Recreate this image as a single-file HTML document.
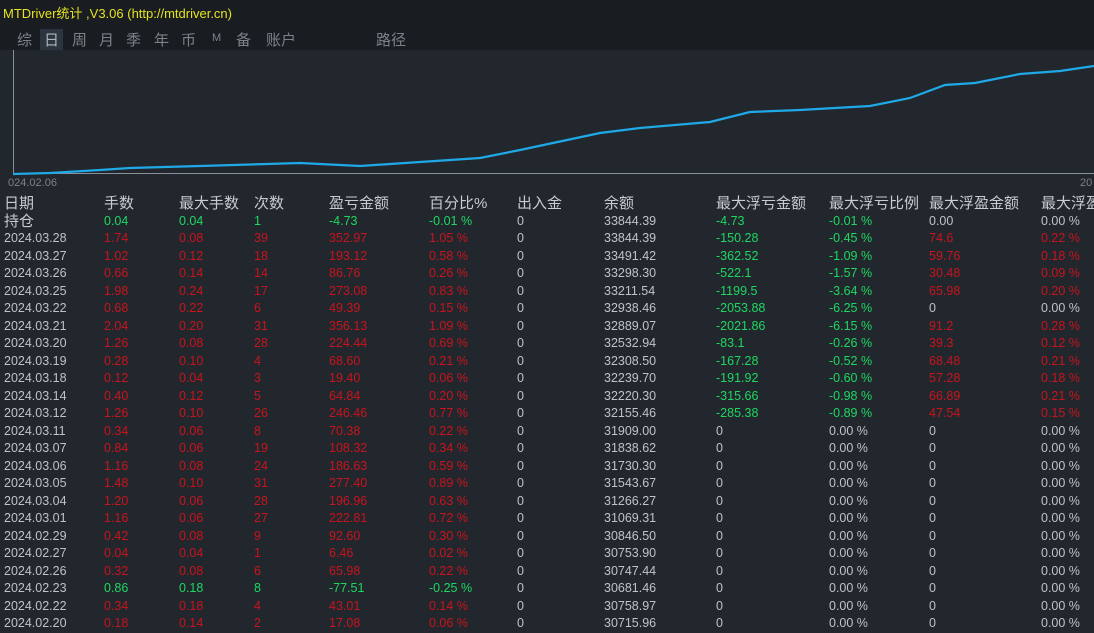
<!DOCTYPE html>
<html><head><meta charset="utf-8"><style>
*{margin:0;padding:0}
body{width:1094px;height:625px;overflow:hidden;background:#22272e;font-family:"Liberation Sans","Noto Sans CJK SC",sans-serif;position:relative}
#top{position:absolute;left:0;top:0;width:1094px;height:50px;background:#191d22}
#title{position:absolute;left:3px;top:3px;color:#e6e21e;font-size:13px}
#tabs{position:absolute;top:29px;font-size:15px;color:#7d8288}
#tabs span{position:absolute;white-space:nowrap}
.sel{background:#2c3440;color:#aeb4bb;padding:0 4px}
.r{position:absolute;left:0;width:1094px;height:17.5px;font-size:12.5px;line-height:17.5px;color:#bfc3c8}
.r span{position:absolute;white-space:nowrap}
.h{font-size:15px;color:#c8ccd0}
.c0{left:4px}.c1{left:104px}.c2{left:179px}.c3{left:254px}.c4{left:329px}.c5{left:429px}.c6{left:517px}.c7{left:604px}.c8{left:716px}.c9{left:829px}.c10{left:929px}.c11{left:1041px}
.R{color:#c8141c}.G{color:#1ed760}
</style></head><body>
<div id="top">
<div id="title">MTDriver统计 ,V3.06 (http://mtdriver.cn)</div>
<div id="tabs">
<span style="left:17px">综</span><span class="sel" style="left:40px">日</span><span style="left:72px">周</span><span style="left:99px">月</span><span style="left:126px">季</span><span style="left:154px">年</span><span style="left:181px">币</span><span style="left:212px;font-size:11px;top:3px">M</span><span style="left:236px">备</span><span style="left:266px">账户</span><span style="left:376px">路径</span>
</div>
</div>
<svg style="position:absolute;left:0;top:50px" width="1094" height="140">
<line x1="13.5" y1="0" x2="13.5" y2="124" stroke="#8a9097" stroke-width="1"/>
<line x1="13" y1="123.5" x2="1094" y2="123.5" stroke="#8a9097" stroke-width="1"/>
<polyline fill="none" stroke="#1fa9e6" stroke-width="2.2" points="13,124 50,123 100,120 130,118 200,116 300,113 360,116 420,112 480,108 520,100 600,83 640,78 710,72 750,62 800,60 870,56 910,48 945,35 975,33 1020,24 1060,21 1094,16"/>
<text x="8" y="136" fill="#7d8288" font-size="11" font-family="Liberation Sans">024.02.06</text>
<text x="1080" y="136" fill="#7d8288" font-size="11" font-family="Liberation Sans">20</text>
</svg>
<div class="r h" style="top:195px"><span class="c0">日期</span><span class="c1">手数</span><span class="c2">最大手数</span><span class="c3">次数</span><span class="c4">盈亏金额</span><span class="c5">百分比%</span><span class="c6">出入金</span><span class="c7">余额</span><span class="c8">最大浮亏金额</span><span class="c9">最大浮亏比例</span><span class="c10">最大浮盈金额</span><span class="c11">最大浮盈</span></div>
<div class="r" style="top:212.5px"><span class="c0 h">持仓</span><span class="c1 G">0.04</span><span class="c2 G">0.04</span><span class="c3 G">1</span><span class="c4 G">-4.73</span><span class="c5 G">-0.01 %</span><span class="c6">0</span><span class="c7">33844.39</span><span class="c8 G">-4.73</span><span class="c9 G">-0.01 %</span><span class="c10">0.00</span><span class="c11">0.00 %</span></div>
<div class="r" style="top:230px"><span class="c0">2024.03.28</span><span class="c1 R">1.74</span><span class="c2 R">0.08</span><span class="c3 R">39</span><span class="c4 R">352.97</span><span class="c5 R">1.05 %</span><span class="c6">0</span><span class="c7">33844.39</span><span class="c8 G">-150.28</span><span class="c9 G">-0.45 %</span><span class="c10 R">74.6</span><span class="c11 R">0.22 %</span></div>
<div class="r" style="top:247.5px"><span class="c0">2024.03.27</span><span class="c1 R">1.02</span><span class="c2 R">0.12</span><span class="c3 R">18</span><span class="c4 R">193.12</span><span class="c5 R">0.58 %</span><span class="c6">0</span><span class="c7">33491.42</span><span class="c8 G">-362.52</span><span class="c9 G">-1.09 %</span><span class="c10 R">59.76</span><span class="c11 R">0.18 %</span></div>
<div class="r" style="top:265px"><span class="c0">2024.03.26</span><span class="c1 R">0.66</span><span class="c2 R">0.14</span><span class="c3 R">14</span><span class="c4 R">86.76</span><span class="c5 R">0.26 %</span><span class="c6">0</span><span class="c7">33298.30</span><span class="c8 G">-522.1</span><span class="c9 G">-1.57 %</span><span class="c10 R">30.48</span><span class="c11 R">0.09 %</span></div>
<div class="r" style="top:282.5px"><span class="c0">2024.03.25</span><span class="c1 R">1.98</span><span class="c2 R">0.24</span><span class="c3 R">17</span><span class="c4 R">273.08</span><span class="c5 R">0.83 %</span><span class="c6">0</span><span class="c7">33211.54</span><span class="c8 G">-1199.5</span><span class="c9 G">-3.64 %</span><span class="c10 R">65.98</span><span class="c11 R">0.20 %</span></div>
<div class="r" style="top:300px"><span class="c0">2024.03.22</span><span class="c1 R">0.68</span><span class="c2 R">0.22</span><span class="c3 R">6</span><span class="c4 R">49.39</span><span class="c5 R">0.15 %</span><span class="c6">0</span><span class="c7">32938.46</span><span class="c8 G">-2053.88</span><span class="c9 G">-6.25 %</span><span class="c10">0</span><span class="c11">0.00 %</span></div>
<div class="r" style="top:317.5px"><span class="c0">2024.03.21</span><span class="c1 R">2.04</span><span class="c2 R">0.20</span><span class="c3 R">31</span><span class="c4 R">356.13</span><span class="c5 R">1.09 %</span><span class="c6">0</span><span class="c7">32889.07</span><span class="c8 G">-2021.86</span><span class="c9 G">-6.15 %</span><span class="c10 R">91.2</span><span class="c11 R">0.28 %</span></div>
<div class="r" style="top:335px"><span class="c0">2024.03.20</span><span class="c1 R">1.26</span><span class="c2 R">0.08</span><span class="c3 R">28</span><span class="c4 R">224.44</span><span class="c5 R">0.69 %</span><span class="c6">0</span><span class="c7">32532.94</span><span class="c8 G">-83.1</span><span class="c9 G">-0.26 %</span><span class="c10 R">39.3</span><span class="c11 R">0.12 %</span></div>
<div class="r" style="top:352.5px"><span class="c0">2024.03.19</span><span class="c1 R">0.28</span><span class="c2 R">0.10</span><span class="c3 R">4</span><span class="c4 R">68.60</span><span class="c5 R">0.21 %</span><span class="c6">0</span><span class="c7">32308.50</span><span class="c8 G">-167.28</span><span class="c9 G">-0.52 %</span><span class="c10 R">68.48</span><span class="c11 R">0.21 %</span></div>
<div class="r" style="top:370px"><span class="c0">2024.03.18</span><span class="c1 R">0.12</span><span class="c2 R">0.04</span><span class="c3 R">3</span><span class="c4 R">19.40</span><span class="c5 R">0.06 %</span><span class="c6">0</span><span class="c7">32239.70</span><span class="c8 G">-191.92</span><span class="c9 G">-0.60 %</span><span class="c10 R">57.28</span><span class="c11 R">0.18 %</span></div>
<div class="r" style="top:387.5px"><span class="c0">2024.03.14</span><span class="c1 R">0.40</span><span class="c2 R">0.12</span><span class="c3 R">5</span><span class="c4 R">64.84</span><span class="c5 R">0.20 %</span><span class="c6">0</span><span class="c7">32220.30</span><span class="c8 G">-315.66</span><span class="c9 G">-0.98 %</span><span class="c10 R">66.89</span><span class="c11 R">0.21 %</span></div>
<div class="r" style="top:405px"><span class="c0">2024.03.12</span><span class="c1 R">1.26</span><span class="c2 R">0.10</span><span class="c3 R">26</span><span class="c4 R">246.46</span><span class="c5 R">0.77 %</span><span class="c6">0</span><span class="c7">32155.46</span><span class="c8 G">-285.38</span><span class="c9 G">-0.89 %</span><span class="c10 R">47.54</span><span class="c11 R">0.15 %</span></div>
<div class="r" style="top:422.5px"><span class="c0">2024.03.11</span><span class="c1 R">0.34</span><span class="c2 R">0.06</span><span class="c3 R">8</span><span class="c4 R">70.38</span><span class="c5 R">0.22 %</span><span class="c6">0</span><span class="c7">31909.00</span><span class="c8">0</span><span class="c9">0.00 %</span><span class="c10">0</span><span class="c11">0.00 %</span></div>
<div class="r" style="top:440px"><span class="c0">2024.03.07</span><span class="c1 R">0.84</span><span class="c2 R">0.06</span><span class="c3 R">19</span><span class="c4 R">108.32</span><span class="c5 R">0.34 %</span><span class="c6">0</span><span class="c7">31838.62</span><span class="c8">0</span><span class="c9">0.00 %</span><span class="c10">0</span><span class="c11">0.00 %</span></div>
<div class="r" style="top:457.5px"><span class="c0">2024.03.06</span><span class="c1 R">1.16</span><span class="c2 R">0.08</span><span class="c3 R">24</span><span class="c4 R">186.63</span><span class="c5 R">0.59 %</span><span class="c6">0</span><span class="c7">31730.30</span><span class="c8">0</span><span class="c9">0.00 %</span><span class="c10">0</span><span class="c11">0.00 %</span></div>
<div class="r" style="top:475px"><span class="c0">2024.03.05</span><span class="c1 R">1.48</span><span class="c2 R">0.10</span><span class="c3 R">31</span><span class="c4 R">277.40</span><span class="c5 R">0.89 %</span><span class="c6">0</span><span class="c7">31543.67</span><span class="c8">0</span><span class="c9">0.00 %</span><span class="c10">0</span><span class="c11">0.00 %</span></div>
<div class="r" style="top:492.5px"><span class="c0">2024.03.04</span><span class="c1 R">1.20</span><span class="c2 R">0.06</span><span class="c3 R">28</span><span class="c4 R">196.96</span><span class="c5 R">0.63 %</span><span class="c6">0</span><span class="c7">31266.27</span><span class="c8">0</span><span class="c9">0.00 %</span><span class="c10">0</span><span class="c11">0.00 %</span></div>
<div class="r" style="top:510px"><span class="c0">2024.03.01</span><span class="c1 R">1.16</span><span class="c2 R">0.06</span><span class="c3 R">27</span><span class="c4 R">222.81</span><span class="c5 R">0.72 %</span><span class="c6">0</span><span class="c7">31069.31</span><span class="c8">0</span><span class="c9">0.00 %</span><span class="c10">0</span><span class="c11">0.00 %</span></div>
<div class="r" style="top:527.5px"><span class="c0">2024.02.29</span><span class="c1 R">0.42</span><span class="c2 R">0.08</span><span class="c3 R">9</span><span class="c4 R">92.60</span><span class="c5 R">0.30 %</span><span class="c6">0</span><span class="c7">30846.50</span><span class="c8">0</span><span class="c9">0.00 %</span><span class="c10">0</span><span class="c11">0.00 %</span></div>
<div class="r" style="top:545px"><span class="c0">2024.02.27</span><span class="c1 R">0.04</span><span class="c2 R">0.04</span><span class="c3 R">1</span><span class="c4 R">6.46</span><span class="c5 R">0.02 %</span><span class="c6">0</span><span class="c7">30753.90</span><span class="c8">0</span><span class="c9">0.00 %</span><span class="c10">0</span><span class="c11">0.00 %</span></div>
<div class="r" style="top:562.5px"><span class="c0">2024.02.26</span><span class="c1 R">0.32</span><span class="c2 R">0.08</span><span class="c3 R">6</span><span class="c4 R">65.98</span><span class="c5 R">0.22 %</span><span class="c6">0</span><span class="c7">30747.44</span><span class="c8">0</span><span class="c9">0.00 %</span><span class="c10">0</span><span class="c11">0.00 %</span></div>
<div class="r" style="top:580px"><span class="c0">2024.02.23</span><span class="c1 G">0.86</span><span class="c2 G">0.18</span><span class="c3 G">8</span><span class="c4 G">-77.51</span><span class="c5 G">-0.25 %</span><span class="c6">0</span><span class="c7">30681.46</span><span class="c8">0</span><span class="c9">0.00 %</span><span class="c10">0</span><span class="c11">0.00 %</span></div>
<div class="r" style="top:597.5px"><span class="c0">2024.02.22</span><span class="c1 R">0.34</span><span class="c2 R">0.18</span><span class="c3 R">4</span><span class="c4 R">43.01</span><span class="c5 R">0.14 %</span><span class="c6">0</span><span class="c7">30758.97</span><span class="c8">0</span><span class="c9">0.00 %</span><span class="c10">0</span><span class="c11">0.00 %</span></div>
<div class="r" style="top:615px"><span class="c0">2024.02.20</span><span class="c1 R">0.18</span><span class="c2 R">0.14</span><span class="c3 R">2</span><span class="c4 R">17.08</span><span class="c5 R">0.06 %</span><span class="c6">0</span><span class="c7">30715.96</span><span class="c8">0</span><span class="c9">0.00 %</span><span class="c10">0</span><span class="c11">0.00 %</span></div>
</body></html>
